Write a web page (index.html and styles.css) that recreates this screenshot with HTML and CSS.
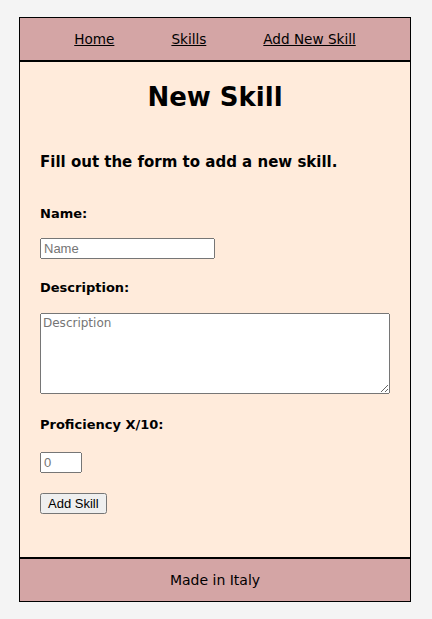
FILE: index.html
```html
<!DOCTYPE html>
<html lang="en">
<head>
    <meta charset="UTF-8">
    <meta name="viewport" content="width=device-width, initial-scale=1.0">
    <title>New Skill</title>
    <link rel="stylesheet" href="styles.css">
</head>
<body>
    <div class="page">
        <header class="header">
            <nav class="menu">
                <a href="#">Home</a>
                <a href="#">Skills</a>
                <a href="#">Add New Skill</a>
            </nav>
        </header>
        <main class="content">
            <h1 class="title">New Skill</h1>
            <h3 class="subtitle">Fill out the form to add a new skill.</h3>
            <form class="skill-form">
                <label for="name">Name:</label>
                <input type="text" id="name" class="name-input" placeholder="Name">
                <label for="description">Description:</label>
                <textarea id="description" class="desc-input" placeholder="Description"></textarea>
                <label for="level">Proficiency X/10:</label>
                <input type="number" id="level" class="level-input" placeholder="0">
                <button type="submit" class="btn">Add Skill</button>
            </form>
        </main>
        <footer class="footer">
            <p>Made in Italy</p>
        </footer>
    </div>
</body>
</html>
```

FILE: styles.css
```css
html{
    box-sizing: border-box;
    font-family: "DejaVu Sans", sans-serif;
    font-size: 14px;
}
*,
*::before,
*::after{
    box-sizing: inherit;
}
body{
    margin: 0;
    background-color: #f4f4f4;
}
.page{
    margin: 17px 21px 18px 19px;
    border: 1px solid #000;
    background-color: #ffebdb;
}
.header{
    height: 44px;
    background-color: #d4a5a5;
    border-bottom: 2px solid #000;
}
.menu{
    display: flex;
    justify-content: center;
    gap: 57px;
    line-height: 42px;
    font-size: 13.6px;
}
.menu a{
    color: #000;
}
.content{
    padding: 0 20px 43px;
}
.title{
    margin: 0;
    padding-top: 18px;
    text-align: center;
    font-size: 26px;
    line-height: 34px;
}
.subtitle{
    margin: 38px 0 0;
    font-size: 15px;
    line-height: 20px;
}
.skill-form{
    display: flex;
    flex-direction: column;
    align-items: flex-start;
    padding-top: 34px;
}
.skill-form label{
    font-weight: bold;
    font-size: 13px;
    line-height: 16px;
}
.skill-form input,
.skill-form textarea,
.btn{
    font-family: "Liberation Sans", Arial, sans-serif;
    font-size: 13px;
}
.name-input{
    margin: 16px 0 21px;
    width: 175px;
    height: 21px;
}
.desc-input{
    margin: 17px 0 23px;
    width: 350px;
    height: 81px;
    font-family: "DejaVu Sans", sans-serif !important;
    font-size: 12px !important;
}
.level-input{
    margin: 19px 0 20px;
    width: 42px;
    height: 21px;
}
.btn{
    height: 21px;
    padding: 0 6px;
}
.footer{
    border-top: 2px solid #000;
    background-color: #d4a5a5;
    text-align: center;
}
.footer p{
    margin: 0;
    line-height: 42px;
}
```
